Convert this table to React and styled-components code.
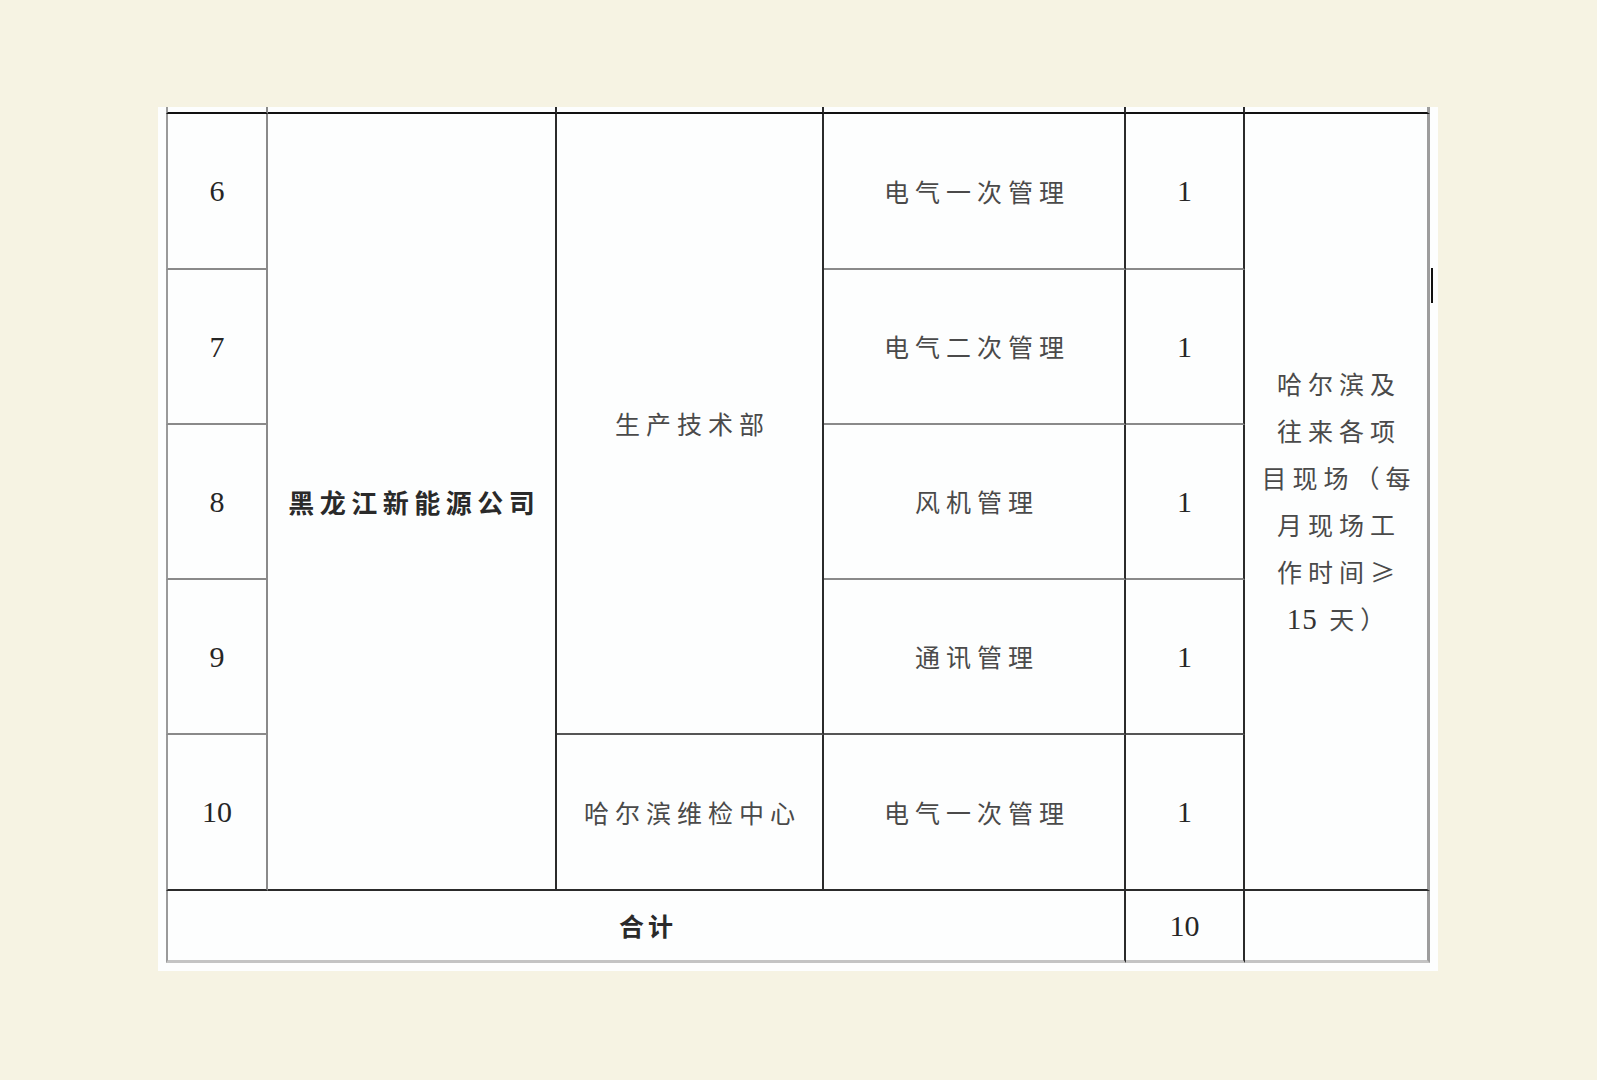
import React from 'react';
import styled, { createGlobalStyle } from 'styled-components';

const GlobalStyle = createGlobalStyle`
  html, body {
    margin: 0;
    padding: 0;
    background: #f6f3e3;
  }
  body {
    font-family: "Liberation Serif", "Noto Sans CJK SC", serif;
  }
`;

const Screen = styled.div`
  width: 1597px;
  height: 1080px;
  padding: 107px 0 0 158px;
  box-sizing: border-box;
`;

const Page = styled.div`
  position: relative;
  width: 1280px;
  padding: 0 8px 8px 8px;
  box-sizing: border-box;
  background: #fdfefe;
`;

const Grid = styled.div`
  display: grid;
  grid-template-columns: 102px 289px 267px 302px 119px 185px;
  grid-template-rows: 7px 156px 155px 155px 155px 156px 72px;
`;

const Cell = styled.div`
  grid-column: ${p => p.$col};
  grid-row: ${p => p.$row};
  display: flex;
  align-items: center;
  justify-content: center;
  box-sizing: border-box;
  border-left: ${p => p.$left || 'none'};
  border-right: ${p => p.$right || 'none'};
  border-bottom: ${p => p.$bottom || 'none'};
`;

const Num = styled.span`
  font-family: "Liberation Serif", "Times New Roman", serif;
  font-size: 30px;
  color: #262626;
  line-height: 1;
`;

const Label = styled.span`
  font-family: "Noto Sans CJK SC", sans-serif;
  font-size: 25px;
  font-weight: 400;
  letter-spacing: 6px;
  margin-right: -6px;
  color: #4a4a4a;
  line-height: 1;
`;

const Company = styled(Label)`
  font-size: 26px;
  font-weight: 700;
  letter-spacing: 5.5px;
  margin-right: -5.5px;
  color: #2a2a2a;
`;

const Total = styled(Label)`
  font-weight: 700;
  letter-spacing: 4px;
  margin-right: -4px;
  color: #2a2a2a;
`;

const Note = styled.div`
  display: flex;
  flex-direction: column;
  align-items: center;
  font-family: "Noto Sans CJK SC", sans-serif;
  font-size: 25px;
  letter-spacing: 6px;
  line-height: 47px;
  color: #4a4a4a;
`;

const NoteLine = styled.span`
  margin-right: -6px;
  white-space: nowrap;
`;

const NoteNum = styled.span`
  font-family: "Liberation Serif", serif;
  font-size: 29px;
  letter-spacing: 1px;
  color: #333;
`;

const Mark = styled.div`
  position: absolute;
  left: 1273px;
  top: 161px;
  width: 2px;
  height: 35px;
  background: #111;
`;

const DARK = '2px solid #2b2b2b';
const GRAY = '2px solid #8a8a8a';
const EDGE = '2px solid #9a9a9a';
const RIGHT_EDGE = '3px solid #9d9d9d';
const TOP = '2px solid #111';
const BOTTOM_EDGE = '3px solid #c4c4c4';

const rows = [
  { n: '6', job: '电气一次管理' },
  { n: '7', job: '电气二次管理' },
  { n: '8', job: '风机管理' },
  { n: '9', job: '通讯管理' },
  { n: '10', job: '电气一次管理' },
];

const note = ['哈尔滨及', '往来各项', '目现场（每', '月现场工', '作时间≥'];

export default function App() {
  return (
    <>
      <GlobalStyle />
      <Screen>
        <Page>
          <Grid>
            {[1, 2, 3, 4, 5, 6].map(c => (
              <Cell
                key={'s' + c}
                $col={c}
                $row={1}
                $left={c === 1 ? EDGE : null}
                $right={c === 1 ? GRAY : c === 6 ? RIGHT_EDGE : DARK}
                $bottom={TOP}
              />
            ))}

            {rows.map((r, i) => (
              <Cell
                key={'n' + i}
                $col={1}
                $row={i + 2}
                $left={EDGE}
                $right={GRAY}
                $bottom={i === 4 ? DARK : GRAY}
              >
                <Num>{r.n}</Num>
              </Cell>
            ))}

            <Cell $col={2} $row="2 / span 5" $right={DARK} $bottom={DARK}>
              <Company>黑龙江新能源公司</Company>
            </Cell>

            <Cell $col={3} $row="2 / span 4" $right={DARK} $bottom="2px solid #555">
              <Label>生产技术部</Label>
            </Cell>
            <Cell $col={3} $row={6} $right={DARK} $bottom={DARK}>
              <Label>哈尔滨维检中心</Label>
            </Cell>

            {rows.map((r, i) => (
              <Cell
                key={'j' + i}
                $col={4}
                $row={i + 2}
                $right={DARK}
                $bottom={i === 4 ? DARK : i === 3 ? '2px solid #555' : GRAY}
              >
                <Label>{r.job}</Label>
              </Cell>
            ))}

            {rows.map((r, i) => (
              <Cell
                key={'c' + i}
                $col={5}
                $row={i + 2}
                $right={DARK}
                $bottom={i === 4 ? DARK : i === 3 ? '2px solid #555' : GRAY}
              >
                <Num>1</Num>
              </Cell>
            ))}

            <Cell $col={6} $row="2 / span 5" $right={RIGHT_EDGE} $bottom={DARK}>
              <Note>
                {note.map(line => (
                  <NoteLine key={line}>{line}</NoteLine>
                ))}
                <NoteLine>
                  <NoteNum>15</NoteNum> 天）
                </NoteLine>
              </Note>
            </Cell>

            <Cell $col="1 / span 4" $row={7} $left={EDGE} $right={DARK} $bottom={BOTTOM_EDGE}>
              <Total>合计</Total>
            </Cell>
            <Cell $col={5} $row={7} $right={DARK} $bottom={BOTTOM_EDGE}>
              <Num>10</Num>
            </Cell>
            <Cell $col={6} $row={7} $right={RIGHT_EDGE} $bottom={BOTTOM_EDGE} />
          </Grid>
          <Mark />
        </Page>
      </Screen>
    </>
  );
}
